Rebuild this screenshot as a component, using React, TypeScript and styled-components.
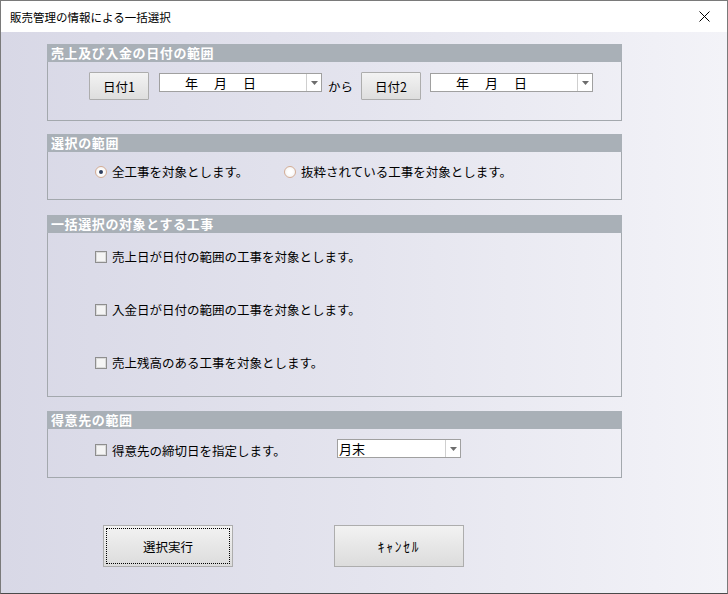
import React from 'react';
import styled, { createGlobalStyle } from 'styled-components';

const GlobalStyle = createGlobalStyle`
  html, body {
    margin: 0;
    padding: 0;
    background: #ffffff;
  }
  * {
    box-sizing: border-box;
  }
  body {
    font-family: "Noto Sans CJK JP", "Noto Sans", sans-serif;
    color: #000;
  }
`;

const Window = styled.div`
  width: 728px;
  height: 594px;
  border: 1px solid #7a7a7a;
  border-bottom-color: #4a4a4a;
  display: flex;
  flex-direction: column;
  overflow: hidden;
`;

const TitleBar = styled.div`
  height: 31px;
  flex: none;
  background: #ffffff;
  display: flex;
  align-items: center;
  justify-content: space-between;
  padding: 0 0 0 9px;
  font-size: 11.5px;
`;

const CloseButton = styled.div`
  width: 46px;
  height: 31px;
  display: flex;
  align-items: center;
  justify-content: center;
`;

const Client = styled.div`
  flex: 1;
  background: linear-gradient(to right, #d8d8e6 0%, #e4e4ee 50%, #f3f3f8 100%);
  padding: 12px 0 0 46px;
  display: flex;
  flex-direction: column;
`;

const Group = styled.div<{ $mt: number }>`
  width: 575px;
  margin-top: ${(p) => p.$mt}px;
  border: 1px solid #a3a8ad;
  border-top: none;
`;

const GroupHeader = styled.div`
  height: 18px;
  background: #a9b0b7;
  color: #ffffff;
  font-weight: bold;
  font-size: 13px;
  letter-spacing: 0.6px;
  line-height: 18px;
  padding-left: 4px;
  margin: 0 -1px;
`;

const GroupBody = styled.div<{ $h: number; $pt: number; $pl: number }>`
  height: ${(p) => p.$h}px;
  padding: ${(p) => p.$pt}px 0 0 ${(p) => p.$pl}px;
  display: flex;
  flex-direction: column;
  gap: 40px;
`;

const Row = styled.div`
  display: flex;
  align-items: center;
  font-size: 12.5px;
  line-height: 13px;
`;

const DateButton = styled.button<{ $ml?: number }>`
  width: 60px;
  height: 28px;
  margin-left: ${(p) => p.$ml ?? 0}px;
  border: 1px solid #adadad;
  border-radius: 1px;
  background: linear-gradient(#f3f3f3, #dedede);
  font-family: inherit;
  font-size: 12.5px;
  color: #000;
  padding: 0;
`;

const Combo = styled.div<{ $w: number; $ml?: number; $mt?: number }>`
  width: ${(p) => p.$w}px;
  height: 19px;
  margin-left: ${(p) => p.$ml ?? 0}px;
  margin-top: ${(p) => p.$mt ?? 0}px;
  background: #ffffff;
  border: 1px solid #a0a0a0;
  display: flex;
  align-self: flex-start;
`;

const ComboText = styled.div<{ $center?: boolean }>`
  flex: 1;
  display: flex;
  align-items: center;
  gap: 16px;
  padding-left: ${(p) => (p.$center ? 25 : 1)}px;
  font-size: 13px;
`;

const ComboArrow = styled.div`
  width: 15px;
  border-left: 1px solid #cfcfcf;
  display: flex;
  align-items: center;
  justify-content: center;
`;

const Kara = styled.span`
  font-size: 12.5px;
  margin-left: 6px;
`;

const Choice = styled.label<{ $w?: number }>`
  display: flex;
  align-items: center;
  gap: 5px;
  width: ${(p) => (p.$w ? `${p.$w}px` : 'auto')};
  font-size: 12.5px;
`;

const Radio = styled.span<{ $on?: boolean }>`
  width: 12px;
  height: 12px;
  flex: none;
  border-radius: 50%;
  border: 1px solid #d4ad95;
  background: radial-gradient(circle, #ffffff 30%, #eeeeee 100%);
  display: flex;
  align-items: center;
  justify-content: center;
  &::after {
    content: '';
    width: 4px;
    height: 4px;
    border-radius: 50%;
    background: ${(p) => (p.$on ? '#2f3f5f' : 'transparent')};
  }
`;

const Check = styled.span`
  width: 12px;
  height: 12px;
  flex: none;
  border: 1px solid #8e8e8e;
  background: #f4f4f4;
  box-shadow: inset 0 0 0 1px #dadada;
`;

const ButtonBar = styled.div`
  display: flex;
  gap: 101px;
  margin: 47px 0 0 56px;
`;

const ActionButton = styled.button<{ $focus?: boolean; $narrow?: boolean }>`
  width: 130px;
  height: 42px;
  border: 1px solid #adadad;
  background: linear-gradient(#f2f2f2, #dcdcdc);
  font-family: inherit;
  font-size: ${(p) => (p.$narrow ? 13.5 : 12.5)}px;
  letter-spacing: ${(p) => (p.$narrow ? 1.8 : 0)}px;
  color: #000;
  padding: 0;
  position: relative;
  &::after {
    content: '';
    position: absolute;
    inset: 2px;
    border: 1px dotted ${(p) => (p.$focus ? '#000' : 'transparent')};
  }
`;

const Arrow = () => (
  <svg width="7" height="4" viewBox="0 0 7 4">
    <path d="M0 0h7L3.5 4z" fill="#6d6d6d" />
  </svg>
);

const DateCombo: React.FC<{ ml: number }> = ({ ml }) => (
  <Combo $w={163} $ml={ml} $mt={1}>
    <ComboText $center>
      <span>年</span>
      <span>月</span>
      <span>日</span>
    </ComboText>
    <ComboArrow>
      <Arrow />
    </ComboArrow>
  </Combo>
);

const App: React.FC = () => {
  return (
    <>
      <GlobalStyle />
      <Window>
        <TitleBar>
          <span>販売管理の情報による一括選択</span>
          <CloseButton>
            <svg width="11" height="11" viewBox="0 0 11 11">
              <path d="M0.5 0.5L10.5 10.5M10.5 0.5L0.5 10.5" stroke="#000" strokeWidth="1" />
            </svg>
          </CloseButton>
        </TitleBar>
        <Client>
          <Group $mt={0}>
            <GroupHeader>売上及び入金の日付の範囲</GroupHeader>
            <GroupBody $h={58} $pt={10} $pl={41}>
              <Row>
                <DateButton>日付1</DateButton>
                <DateCombo ml={10} />
                <Kara>から</Kara>
                <DateButton $ml={8}>日付2</DateButton>
                <DateCombo ml={9} />
              </Row>
            </GroupBody>
          </Group>

          <Group $mt={13}>
            <GroupHeader>選択の範囲</GroupHeader>
            <GroupBody $h={47} $pt={13} $pl={47}>
              <Row>
                <Choice $w={189}>
                  <Radio $on />
                  全工事を対象とします。
                </Choice>
                <Choice>
                  <Radio />
                  抜粋されている工事を対象とします。
                </Choice>
              </Row>
            </GroupBody>
          </Group>

          <Group $mt={15}>
            <GroupHeader>一括選択の対象とする工事</GroupHeader>
            <GroupBody $h={163} $pt={17} $pl={47}>
              <Row>
                <Choice>
                  <Check />
                  売上日が日付の範囲の工事を対象とします。
                </Choice>
              </Row>
              <Row>
                <Choice>
                  <Check />
                  入金日が日付の範囲の工事を対象とします。
                </Choice>
              </Row>
              <Row>
                <Choice>
                  <Check />
                  売上残高のある工事を対象とします。
                </Choice>
              </Row>
            </GroupBody>
          </Group>

          <Group $mt={14}>
            <GroupHeader>得意先の範囲</GroupHeader>
            <GroupBody $h={48} $pt={13} $pl={47}>
              <Row>
                <Choice $w={242}>
                  <Check />
                  得意先の締切日を指定します。
                </Choice>
                <Combo $w={124} $mt={-3}>
                  <ComboText>月末</ComboText>
                  <ComboArrow>
                    <Arrow />
                  </ComboArrow>
                </Combo>
              </Row>
            </GroupBody>
          </Group>

          <ButtonBar>
            <ActionButton $focus>選択実行</ActionButton>
            <ActionButton $narrow>ｷｬﾝｾﾙ</ActionButton>
          </ButtonBar>
        </Client>
      </Window>
    </>
  );
};

export default App;
